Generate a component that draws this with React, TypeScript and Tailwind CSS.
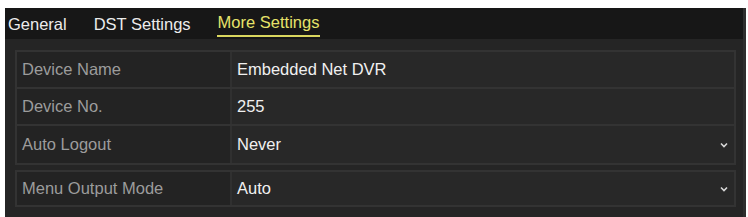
import React from 'react';

const FONT = { fontFamily: '"Liberation Sans", Arial, sans-serif' };

function Chevron() {
  return (
    <svg width="8" height="6" viewBox="0 0 8 6" className="shrink-0">
      <path d="M1 1.5 L4 4.5 L7 1.5" fill="none" stroke="#d8d8d8" strokeWidth="1.6" />
    </svg>
  );
}

function Row({ label, value, select, last, h = 'h-[37px]' }: { label: string; value: string; select?: boolean; last?: boolean; h?: string }) {
  return (
    <div className={'flex ' + h + ' ' + (last ? '' : 'border-b-2 border-[#333333]')}>
      <div className="w-[215px] shrink-0 flex items-center pl-[5px] bg-[#232323] border-r-2 border-[#303030] text-[#9c9c9c]">
        {label}
      </div>
      <div className="flex-1 flex items-center justify-between pl-[5px] pr-[6px] bg-[#282828] text-[#f0f0f0]">
        <span>{value}</span>
        {select && <Chevron />}
      </div>
    </div>
  );
}

export default function App() {
  return (
    <div className="w-[748px] h-[217px] bg-white pl-[5px] pr-[2px] pt-[8px] overflow-hidden text-[16.5px]" style={FONT}>
      <div className="h-[209px] bg-[#252525] flex flex-col border-r-[3px] border-[#2e2e2e]">
        <div className="h-[31px] bg-[#171717] flex items-start pl-[3px] gap-[27px] shrink-0">
          <div className="pt-[4px] text-[#ececec]">General</div>
          <div className="pt-[4px] text-[#ececec]">DST Settings</div>
          <div className="pt-[4px] flex flex-col items-stretch text-[#e6e36a]">
            <span className="leading-[20px]">More Settings</span>
            <span className="h-[2px] mt-[3px] -mx-[1px] bg-[#d9d65e]" />
          </div>
        </div>
        <div className="flex-1 pt-[11px] pl-[10px] pr-[7px] flex flex-col gap-[5px]">
          <div className="border-2 border-[#333333] flex flex-col">
            <Row label="Device Name" value="Embedded Net DVR" />
            <Row label="Device No." value="255" />
            <Row label="Auto Logout" value="Never" select last />
          </div>
          <div className="border-2 border-[#333333] flex flex-col">
            <Row label="Menu Output Mode" value="Auto" select last h="h-[33px]" />
          </div>
        </div>
      </div>
    </div>
  );
}
